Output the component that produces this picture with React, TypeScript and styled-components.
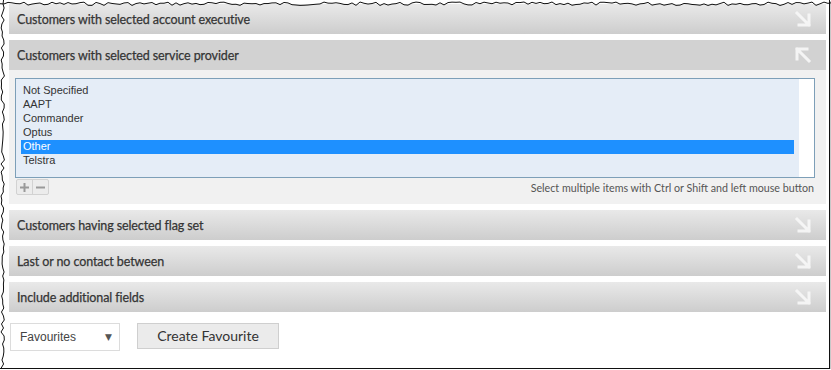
import styled, { createGlobalStyle } from 'styled-components'

const GlobalStyle = createGlobalStyle`
  html, body {
    margin: 0;
    padding: 0;
    background: #ffffff;
  }
`

const Frame = styled.div`
  position: relative;
  box-sizing: border-box;
  width: 830px;
  height: 369px;
  padding: 4px 3px 0 9px;
  border-right: 1px solid #111;
  border-bottom: 1px solid #111;
  box-shadow: 1px 1px 0 #c8c8c8;
  display: flex;
  flex-direction: column;
  gap: 6px;
  background: #fff;
`

const TornEdge = styled.svg`
  position: absolute;
  left: 0;
  top: 0;
  pointer-events: none;
`

const Section = styled.div`
  display: flex;
  flex-direction: column;
`

const Header = styled.div<{ $open?: boolean }>`
  height: 30px;
  box-sizing: border-box;
  padding: 0 14px 0 8px;
  display: flex;
  align-items: center;
  justify-content: space-between;
  font-family: Lato, 'Liberation Sans', sans-serif;
  font-size: 12.5px;
  letter-spacing: -0.1px;
  -webkit-text-stroke: 0.25px #353535;
  color: #353535;
  background: ${({ $open }) =>
    $open ? '#d2d2d2' : 'linear-gradient(#e9e9e9, #cdcdcd)'};
`

const Body = styled.div`
  height: 134px;
  box-sizing: border-box;
  padding: 8px 11px 0 6px;
  background: #f1f1f1;
`

const ListBox = styled.div`
  height: 100px;
  box-sizing: border-box;
  border: 1px solid #7d9fb8;
  display: grid;
  grid-template-columns: 1fr 15px;
  background: #fff;
`

const Options = styled.div`
  background: #e5edf7;
  padding: 5px 5px 0;
`

const Option = styled.div<{ $selected?: boolean }>`
  height: 14px;
  line-height: 13px;
  padding-left: 2px;
  font-family: 'Liberation Sans', Arial, sans-serif;
  font-size: 11px;
  color: ${({ $selected }) => ($selected ? '#fff' : '#333')};
  background: ${({ $selected }) => ($selected ? '#1e90ff' : 'transparent')};
`

const ListFooter = styled.div`
  display: flex;
  justify-content: space-between;
  align-items: flex-start;
  padding: 1px 1px 0 1px;
`

const SmallButtons = styled.div`
  display: flex;
  border: 1px solid #d2d2d2;
  border-radius: 2px;
  background: #ececec;
`

const SmallButton = styled.div`
  width: 15px;
  height: 14px;
  display: flex;
  align-items: center;
  justify-content: center;
  & + & {
    border-left: 1px solid #d2d2d2;
  }
`

const Hint = styled.div`
  font-family: Lato, 'Liberation Sans', sans-serif;
  font-size: 10.7px;
  color: #555;
  padding-top: 2px;
`

const Footer = styled.div`
  display: flex;
  align-items: flex-start;
  gap: 17px;
  margin-top: 5px;
  margin-left: 1px;
`

const Select = styled.div`
  width: 110px;
  height: 28px;
  box-sizing: border-box;
  border: 1px solid #dcdcdc;
  background: #fff;
  display: flex;
  align-items: center;
  justify-content: space-between;
  padding: 0 7px 0 9px;
  font-family: 'Liberation Sans', Arial, sans-serif;
  font-size: 12px;
  color: #444;
`

const Caret = styled.span`
  font-family: 'DejaVu Sans', sans-serif;
  font-size: 9px;
  color: #555;
`

const Button = styled.div`
  width: 142px;
  height: 26px;
  box-sizing: border-box;
  border: 1px solid #cfcfcf;
  background: #ebebeb;
  display: flex;
  align-items: center;
  justify-content: center;
  padding-bottom: 1px;
  font-family: Lato, 'Liberation Sans', sans-serif;
  font-size: 14px;
  color: #333;
`

const Arrow = ({ open }: { open?: boolean }) => (
  <svg width="18" height="18" viewBox="0 0 18 18">
    <g
      fill="none"
      stroke="#f7f7f7"
      strokeOpacity={0.9}
      strokeWidth={3}
      strokeLinecap="square"
    >
      {open ? (
        <path d="M15 15 L3 3 M3 13 L3 3 L13 3" />
      ) : (
        <path d="M3 3 L15 15 M15 5 L15 15 L5 15" />
      )}
    </g>
  </svg>
)

const PlusMinus = ({ minus }: { minus?: boolean }) => (
  <svg width="9" height="9" viewBox="0 0 9 9">
    <g stroke="#9a9a9a" strokeWidth={2}>
      <path d="M0 4.5 H9" />
      {!minus && <path d="M4.5 0 V9" />}
    </g>
  </svg>
)

// deterministic jagged line for the torn top/left edge
const jag = (count: number, seed: number) => {
  const pts: number[] = []
  let s = seed
  for (let i = 0; i < count; i++) {
    s = (s * 9301 + 49297) % 233280
    pts.push(s / 233280)
  }
  return pts
}

const topPoints = jag(210, 7)
  .map((r, i) => `${i * 4},${2 + r * 3.5}`)
  .join(' ')
const leftPoints = jag(95, 13)
  .map((r, i) => `${1 + r * 3.5},${i * 4}`)
  .join(' ')

const providers = ['Not Specified', 'AAPT', 'Commander', 'Optus', 'Other', 'Telstra']

const collapsed = [
  'Customers having selected flag set',
  'Last or no contact between',
  'Include additional fields',
]

export default function App() {
  return (
    <>
      <GlobalStyle />
      <Frame>
        <Header>
          <span>Customers with selected account executive</span>
          <Arrow />
        </Header>
        <Section>
          <Header $open>
            <span>Customers with selected service provider</span>
            <Arrow open />
          </Header>
          <Body>
            <ListBox>
              <Options>
                {providers.map((p) => (
                  <Option key={p} $selected={p === 'Other'}>
                    {p}
                  </Option>
                ))}
              </Options>
            </ListBox>
            <ListFooter>
              <SmallButtons>
                <SmallButton>
                  <PlusMinus />
                </SmallButton>
                <SmallButton>
                  <PlusMinus minus />
                </SmallButton>
              </SmallButtons>
              <Hint>Select multiple items with Ctrl or Shift and left mouse button</Hint>
            </ListFooter>
          </Body>
        </Section>
        {collapsed.map((title) => (
          <Header key={title}>
            <span>{title}</span>
            <Arrow />
          </Header>
        ))}
        <Footer>
          <Select>
            <span>Favourites</span>
            <Caret>▼</Caret>
          </Select>
          <Button>Create Favourite</Button>
        </Footer>
        <TornEdge width="831" height="370">
          <polyline points={topPoints} fill="none" stroke="#111" strokeWidth={1} />
          <polyline points={leftPoints} fill="none" stroke="#111" strokeWidth={1} />
        </TornEdge>
      </Frame>
    </>
  )
}
